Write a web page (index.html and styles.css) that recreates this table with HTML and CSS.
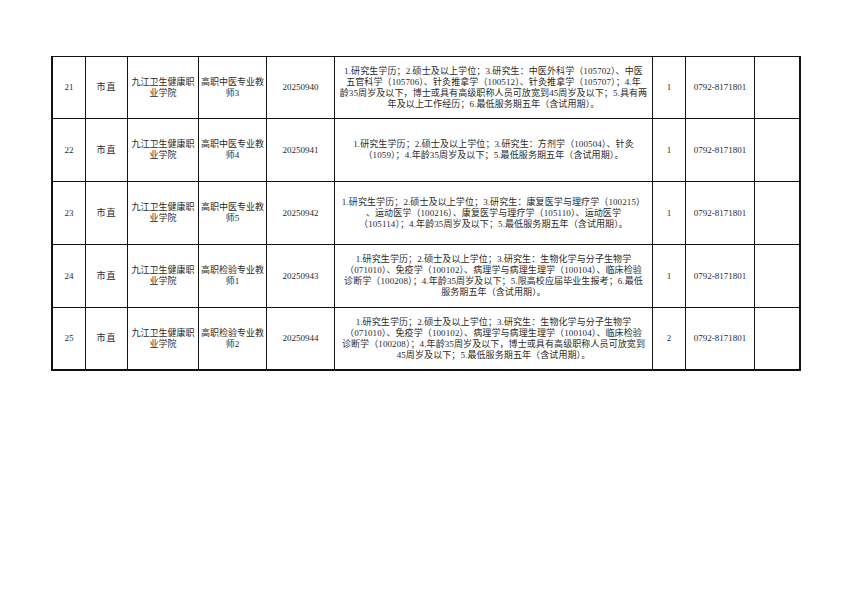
FILE: index.html
```html
<!DOCTYPE html>
<html lang="zh-CN">
<head>
<meta charset="utf-8">
<title>岗位表</title>
<link rel="stylesheet" href="styles.css">
</head>
<body>
<div class="sheet">
  <div class="grid">
    <div class="c">21</div><div class="c sp">市直</div><div class="c">九江卫生健康职业学院</div><div class="c">高职中医专业教师3</div><div class="c">20250940</div>
    <div class="c desc">1.研究生学历；2.硕士及以上学位；3.研究生：中医外科学（105702）、中医<br>五官科学（105706）、针灸推拿学（100512）、针灸推拿学（105707）；4.年<br>龄35周岁及以下，博士或具有高级职称人员可放宽到45周岁及以下；5.具有两<br>年及以上工作经历；6.最低服务期五年（含试用期）。</div>
    <div class="c">1</div><div class="c">0792-8171801</div><div class="c"></div>

    <div class="c">22</div><div class="c sp">市直</div><div class="c">九江卫生健康职业学院</div><div class="c">高职中医专业教师4</div><div class="c">20250941</div>
    <div class="c desc">1.研究生学历；2.硕士及以上学位；3.研究生：方剂学（100504）、针灸<br>（1059）；4.年龄35周岁及以下；5.最低服务期五年（含试用期）。</div>
    <div class="c">1</div><div class="c">0792-8171801</div><div class="c"></div>

    <div class="c">23</div><div class="c sp">市直</div><div class="c">九江卫生健康职业学院</div><div class="c">高职中医专业教师5</div><div class="c">20250942</div>
    <div class="c desc">1.研究生学历；2.硕士及以上学位；3.研究生：康复医学与理疗学（100215）<br>、运动医学（100216）、康复医学与理疗学（105110）、运动医学<br>（105114）；4.年龄35周岁及以下；5.最低服务期五年（含试用期）。</div>
    <div class="c">1</div><div class="c">0792-8171801</div><div class="c"></div>

    <div class="c">24</div><div class="c sp">市直</div><div class="c">九江卫生健康职业学院</div><div class="c">高职检验专业教师1</div><div class="c">20250943</div>
    <div class="c desc">1.研究生学历；2.硕士及以上学位；3.研究生：生物化学与分子生物学<br>（071010）、免疫学（100102）、病理学与病理生理学（100104）、临床检验<br>诊断学（100208）；4.年龄35周岁及以下；5.限高校应届毕业生报考；6.最低<br>服务期五年（含试用期）。</div>
    <div class="c">1</div><div class="c">0792-8171801</div><div class="c"></div>

    <div class="c">25</div><div class="c sp">市直</div><div class="c">九江卫生健康职业学院</div><div class="c">高职检验专业教师2</div><div class="c">20250944</div>
    <div class="c desc">1.研究生学历；2.硕士及以上学位；3.研究生：生物化学与分子生物学<br>（071010）、免疫学（100102）、病理学与病理生理学（100104）、临床检验<br>诊断学（100208）；4.年龄35周岁及以下，博士或具有高级职称人员可放宽到<br>45周岁及以下；5.最低服务期五年（含试用期）。</div>
    <div class="c">2</div><div class="c">0792-8171801</div><div class="c"></div>
  </div>
</div>
</body>
</html>
```
FILE: styles.css
```css
html, body {
  margin: 0;
  padding: 0;
  background: #fff;
}
body {
  width: 860px;
  height: 608px;
  overflow: hidden;
  font-family: "Liberation Serif", "Noto Sans CJK SC", serif;
  font-size: 9px;
  color: #2a2a2a;
}
.sheet {
  padding: 56px 0 0 51px;
}
.grid {
  display: grid;
  width: max-content;
  grid-template-columns: 32px 41px 70px 67px 67px 317px 32px 68px 44px;
  grid-template-rows: 61px 62px 62px 62px 61px;
  gap: 1px;
  background: #111;
  border-style: solid;
  border-color: #111;
  border-width: 1px 2px 2px 2px;
}
.c {
  background: #fff;
  display: flex;
  align-items: center;
  justify-content: center;
  text-align: center;
  line-height: 11px;
  padding: 0 2px;
  overflow: hidden;
}
.sp {
  letter-spacing: 1px;
}
.desc {
  white-space: nowrap;
  padding: 0;
  letter-spacing: 0.1px;
}
```
